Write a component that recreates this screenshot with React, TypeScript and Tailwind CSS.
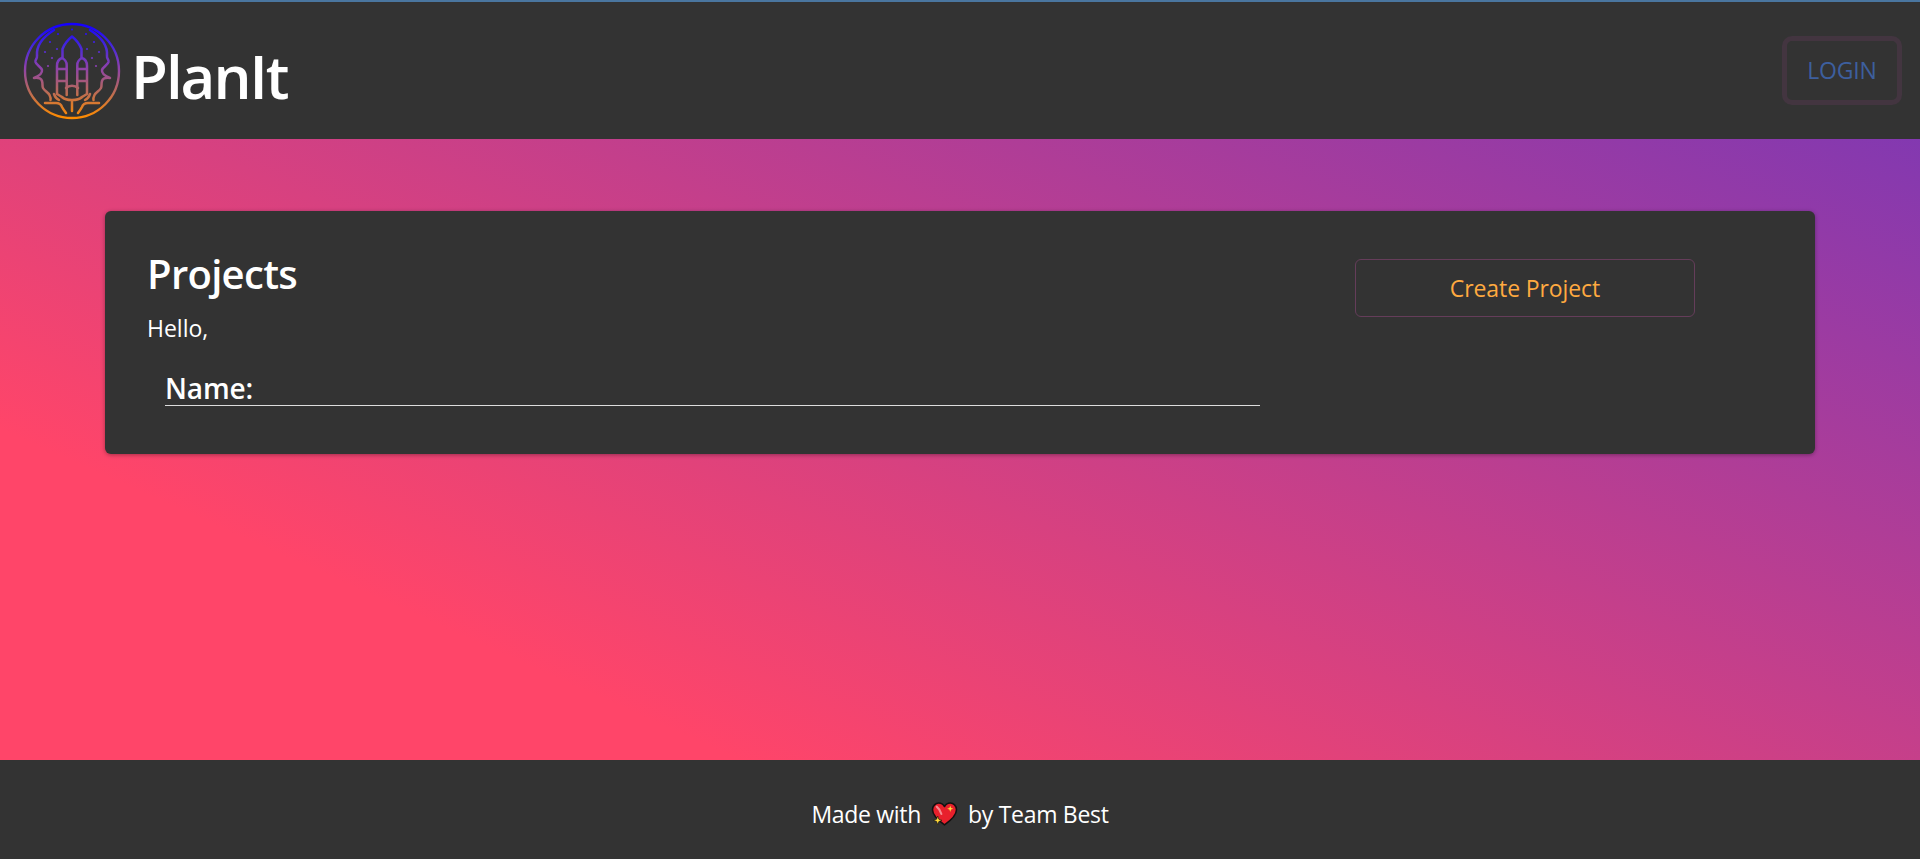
import React from "react";

function Side() {
  return (
    <>
      <path d="M31 8C20 15 13 24 14 34c.4 3-2 3-1.500 6 .6 3 6 5 6.500 8 .4 3-3 6-8 8 4-.500 7 0 8 3 1 3 0 5 1 7 1.500 3 5 4 6.500 7 1 2 1.500 3 1 5" />
      <path d="M22 81h11c3 0 5 1 6 4 1 2 2.500 4 4 6" />
      <path d="M31 72c1 3 3 5 5 6" />
      <path d="M34 44c0-4 2-7 5-8 2 1 4.700 3 4.700 7v30M34 44v28l5 3M34 47h9.700M34 59h9.700" />
    </>
  );
}

function Logo() {
  const s = { fill: "none", stroke: "url(#lg)", strokeLinecap: "round" as const, strokeLinejoin: "round" as const };
  return (
    <svg width="98" height="98" viewBox="0 0 98 98" className="shrink-0">
      <defs>
        <linearGradient id="lg" gradientUnits="userSpaceOnUse" x1="0" y1="2" x2="0" y2="96">
          <stop offset="0" stopColor="#1400ff" />
          <stop offset="0.25" stopColor="#4a2ad8" />
          <stop offset="0.45" stopColor="#8a3fb0" />
          <stop offset="0.72" stopColor="#b96a58" />
          <stop offset="1" stopColor="#ff8c00" />
        </linearGradient>
      </defs>
      <circle cx="49" cy="49" r="47" {...s} strokeWidth="2.4" />
      <g {...s} strokeWidth="2.5">
        <Side />
        <g transform="translate(98 0) scale(-1 1)">
          <Side />
        </g>
        <path d="M39.500 36v-9c2-5 5-9 9.500-12.500 4.500 3.500 7.500 7.500 9.500 12.500v9" />
        <path d="M43 66c3-3 9-3 12 0" />
        <path d="M39 75c2 2 5 3 10 3s8-1 10-3M49 79v10" />
      </g>
      <g fill="url(#lg)">
        <circle cx="49" cy="7.500" r="1.100" /><circle cx="35" cy="12" r="1.100" /><circle cx="63" cy="12" r="1.100" />
        <circle cx="27" cy="20" r="1.100" /><circle cx="71" cy="20" r="1.100" /><circle cx="34" cy="27" r="1.100" />
        <circle cx="64" cy="27" r="1.100" /><circle cx="22" cy="30" r="1.100" /><circle cx="76" cy="30" r="1.100" />
        <circle cx="29" cy="36" r="1.100" /><circle cx="69" cy="36" r="1.100" /><circle cx="25" cy="44" r="1.100" /><circle cx="73" cy="44" r="1.100" />
      </g>
    </svg>
  );
}

function Heart() {
  return (
    <svg width="27" height="24" viewBox="1 1 25 23" className="inline-block shrink-0">
      <path d="M13.500 23C5 17 2 13 2 8.500 2 4.500 5 2 8 2c2.500 0 4.300 1.300 5.500 3.300C14.700 3.300 16.500 2 19 2c3 0 6 2.500 6 6.500 0 4.500-3 8.500-11.500 14.500Z" fill="#e8202c" stroke="#111" strokeWidth="1.500" strokeLinejoin="round" />
      <path d="M6 5.500c2 1.500 3.500 4 4.500 7" fill="none" stroke="#f58a90" strokeWidth="2" strokeLinecap="round" />
      <path d="M19 4.500l.8 2.200 2.200.8-2.200.8-.8 2.200-.8-2.200-2.200-.8 2.200-.8Z" fill="#ffd83a" />
      <path d="M7 14.500l1.100 3 3 1.100-3 1.100L7 22.700l-1.100-3-3-1.100 3-1.100Z" fill="#ffd83a" stroke="#111" strokeWidth="0.6" />
    </svg>
  );
}

export default function App() {
  return (
    <div className="flex h-[859px] flex-col bg-[linear-gradient(to_top_right,#ff4569_25%,#7437b9_100%)] font-['Open_Sans','Noto_Sans',sans-serif] text-white">
      <header className="flex h-[139px] shrink-0 items-center justify-between border-t-2 border-[#4a76a0] bg-[#333333] pl-[23px] pr-[18px]">
        <div className="flex items-center gap-[10px]">
          <Logo />
          <span className="pt-[10px] text-[60px] font-semibold leading-none tracking-[-2px]">PlanIt</span>
        </div>
        <button className="flex h-[69px] w-[120px] items-center justify-center rounded-[10px] border-[5px] border-[#433540] text-[23px] tracking-[-0.2px] text-[#3d5f9e]">
          LOGIN
        </button>
      </header>
      <main className="flex flex-1 items-start px-[105px] pt-[72px]">
        <section className="flex h-[243px] w-full justify-between rounded-md bg-[#333333] pl-[42px] pr-[120px] shadow-[0_1px_4px_rgba(0,0,0,0.35)]">
          <div className="w-[1113px] pt-[36px]">
            <h2 className="text-[40px] font-semibold leading-[54px] tracking-[-0.7px]">Projects</h2>
            <p className="mt-[12px] text-[23px] leading-[30px]">Hello,</p>
            <div className="ml-[18px] mt-[28px] h-[35px] border-b border-[#dddddd] text-[28px] font-semibold leading-[35px] tracking-[-0.1px]">
              Name:
            </div>
          </div>
          <button className="mt-[48px] h-[58px] w-[340px] rounded-md border border-[#653d5a] text-[23px] tracking-[-0.1px] text-[#ffaa40]">
            Create Project
          </button>
        </section>
      </main>
      <footer className="flex h-[99px] shrink-0 items-center justify-center gap-[10px] bg-[#333333] pt-[9px] text-[23px] tracking-[-0.3px]">
        <span>Made with</span>
        <Heart />
        <span>by Team Best</span>
      </footer>
    </div>
  );
}
